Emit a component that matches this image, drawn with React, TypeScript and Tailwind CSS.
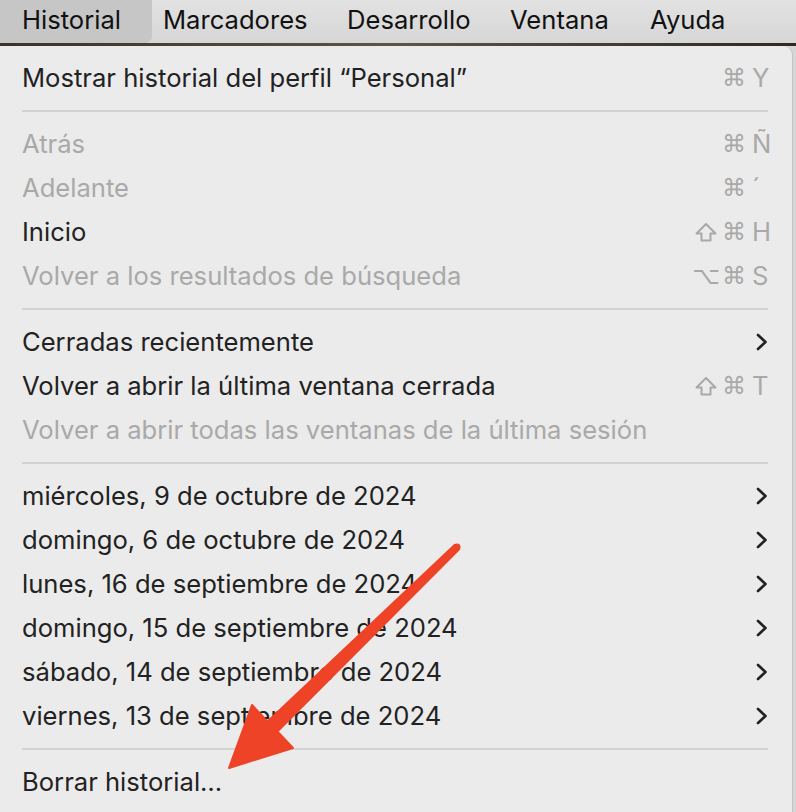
import React from "react";

type Item =
  | { kind: "sep" }
  | {
      kind: "item";
      label: string;
      disabled?: boolean;
      mods?: string[];
      keyChar?: string;
      sub?: boolean;
    };

const items: Item[] = [
  { kind: "item", label: "Mostrar historial del perfil “Personal”", mods: ["⌘"], keyChar: "Y" },
  { kind: "sep" },
  { kind: "item", label: "Atrás", disabled: true, mods: ["⌘"], keyChar: "Ñ" },
  { kind: "item", label: "Adelante", disabled: true, mods: ["⌘"], keyChar: "´" },
  { kind: "item", label: "Inicio", mods: ["⇧", "⌘"], keyChar: "H" },
  { kind: "item", label: "Volver a los resultados de búsqueda", disabled: true, mods: ["⌥", "⌘"], keyChar: "S" },
  { kind: "sep" },
  { kind: "item", label: "Cerradas recientemente", sub: true },
  { kind: "item", label: "Volver a abrir la última ventana cerrada", mods: ["⇧", "⌘"], keyChar: "T" },
  { kind: "item", label: "Volver a abrir todas las ventanas de la última sesión", disabled: true },
  { kind: "sep" },
  { kind: "item", label: "miércoles, 9 de octubre de 2024", sub: true },
  { kind: "item", label: "domingo, 6 de octubre de 2024", sub: true },
  { kind: "item", label: "lunes, 16 de septiembre de 2024", sub: true },
  { kind: "item", label: "domingo, 15 de septiembre de 2024", sub: true },
  { kind: "item", label: "sábado, 14 de septiembre de 2024", sub: true },
  { kind: "item", label: "viernes, 13 de septiembre de 2024", sub: true },
  { kind: "sep" },
  { kind: "item", label: "Borrar historial…" },
];

function Chevron() {
  return (
    <svg width="14" height="18" viewBox="0 0 14 18" className="mr-[1px]">
      <path d="M3 2 L10.5 9 L3 16" fill="none" stroke="#222" strokeWidth="2.6" strokeLinecap="round" strokeLinejoin="round" />
    </svg>
  );
}

function ShiftGlyph() {
  return (
    <svg width="22" height="20" viewBox="0 0 22 20">
      <path
        d="M11 2 L20.5 11.5 L15.5 11.5 L15.5 18.5 L6.5 18.5 L6.5 11.5 L1.5 11.5 Z"
        fill="none"
        stroke="#a9a9a9"
        strokeWidth="2"
        strokeLinejoin="round"
      />
    </svg>
  );
}

function Shortcut({ mods, keyChar }: { mods: string[]; keyChar: string }) {
  return (
    <div className="flex items-center text-[#a9a9a9]">
      {mods.map((m, i) => (
        <span
          key={i}
          className="flex w-[28px] items-center justify-center text-[24px]"
          style={{ fontFamily: '"DejaVu Sans", sans-serif' }}
        >
          {m === "⇧" ? <ShiftGlyph /> : m}
        </span>
      ))}
      <span className="ml-[4px] w-[18px] text-left">{keyChar}</span>
    </div>
  );
}

export default function App() {
  return (
    <div
      className="relative h-[812px] w-[796px] overflow-hidden bg-[#d6d6d6] text-[25.6px]"
      style={{ fontFamily: 'Inter, "DejaVu Sans", sans-serif' }}
    >
      {/* menu bar */}
      <div className="flex h-[43px] items-center bg-gradient-to-b from-[#e2e2e2] to-[#d6d6d6] text-[#111]">
        <div className="flex h-full w-[152px] items-center rounded-br-[7px] bg-[#c6c6c6] pl-[22px] pb-[2px]">
          Historial
        </div>
        <div className="ml-[11px] w-[184px] pb-[2px]">Marcadores</div>
        <div className="w-[163px] pb-[2px]">Desarrollo</div>
        <div className="w-[140px] pb-[2px]">Ventana</div>
        <div className="pb-[2px]">Ayuda</div>
      </div>
      {/* photo strip behind */}
      <div className="h-[3px] bg-gradient-to-r from-[#3a3428] via-[#5a5546] to-[#2e2a22]" />

      {/* menu */}
      <div className="w-[793px] rounded-tr-[9px] border-r border-[#c4c4c4] bg-[#ebebeb] pt-[10px] pb-[8px]">
        {items.map((it, i) =>
          it.kind === "sep" ? (
            <div key={i} className="flex h-[22px] items-center pl-[22px] pr-[24px]">
              <div className="h-[2px] w-full bg-[#d2d2d2]" />
            </div>
          ) : (
            <div
              key={i}
              className={`flex h-[44px] items-center justify-between pl-[22px] pr-[22px] ${
                it.disabled ? "text-[#a9a9a9]" : "text-[#222]"
              }`}
            >
              <span>{it.label}</span>
              {it.sub && <Chevron />}
              {it.mods && it.keyChar && <Shortcut mods={it.mods} keyChar={it.keyChar} />}
            </div>
          )
        )}
      </div>

      {/* annotation arrow */}
      <svg className="pointer-events-none absolute left-0 top-0" width="796" height="812" viewBox="0 0 796 812">
        <polygon
          points="454.9,544.8 267.6,721.5 252,705 229,768 293,748 277.4,731.5 459.1,549.2"
          fill="#ee4326"
          stroke="#ee4326"
          strokeWidth="2"
          strokeLinejoin="round"
        />
        <circle cx="457" cy="547" r="3.5" fill="#ee4326" />
      </svg>
    </div>
  );
}
